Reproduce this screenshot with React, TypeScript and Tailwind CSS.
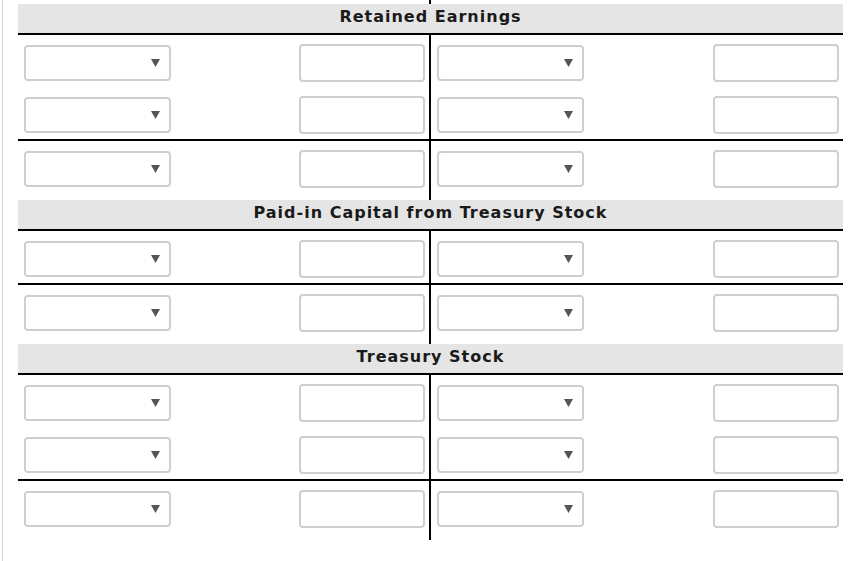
import React from 'react';

const sections = [
  { title: 'Retained Earnings', groups: [2, 1] },
  { title: 'Paid-in Capital from Treasury Stock', groups: [1, 1] },
  { title: 'Treasury Stock', groups: [2, 1] },
];

function Arrow() {
  return (
    <svg width="9" height="8" viewBox="0 0 9 8" className="block">
      <path d="M0 0 H9 L4.5 8 Z" fill="#555555" />
    </svg>
  );
}

function Select() {
  return (
    <div className="flex h-[36px] w-[147px] items-center justify-end rounded-[4px] border-2 border-[#cfcfcf] bg-white pr-[9px]">
      <Arrow />
    </div>
  );
}

function Amount() {
  return (
    <input
      type="text"
      className="h-[38px] w-[126px] rounded-[4px] border-2 border-[#cfcfcf] bg-white outline-none"
    />
  );
}

function Line() {
  return (
    <div className="flex items-center justify-between">
      <Select />
      <Amount />
    </div>
  );
}

/** one block of rows, split down the middle */
function Group({ rows, last }: { rows: number; last: boolean }) {
  const items = Array.from({ length: rows });
  return (
    <div className={last ? 'flex' : 'flex border-b-2 border-black'}>
      <div
        className={`flex w-[413px] flex-col gap-[14px] border-r-2 border-black pl-[6px] pr-[4px] pt-[9px] ${last ? 'pb-[12px]' : 'pb-[5px]'}`}
      >
        {items.map((_, i) => (
          <Line key={i} />
        ))}
      </div>
      <div
        className={`flex w-[412px] flex-col gap-[14px] pl-[6px] pr-[4px] pt-[9px] ${last ? 'pb-[12px]' : 'pb-[5px]'}`}
      >
        {items.map((_, i) => (
          <Line key={i} />
        ))}
      </div>
    </div>
  );
}

export default function App() {
  return (
    <div className="flex min-h-screen bg-white text-[#1a1a1a]" style={{ fontFamily: '"DejaVu Sans", Verdana, sans-serif' }}>
      <div className="ml-[2px] w-px bg-[#cddaea]" />
      <div className="ml-[15px] w-[825px]">
        {/* line above the first header */}
        <div className="flex h-[4px]">
          <div className="w-[413px] border-r-2 border-black" />
        </div>

        {sections.map((s) => (
          <div key={s.title}>
            <div className="h-[31px] border-b-2 border-black bg-[#e5e5e5] text-center text-[16px] font-bold leading-[25px] tracking-[1px]">
              {s.title}
            </div>
            {s.groups.map((rows, i) => (
              <Group key={i} rows={rows} last={i === s.groups.length - 1} />
            ))}
          </div>
        ))}
      </div>
    </div>
  );
}
